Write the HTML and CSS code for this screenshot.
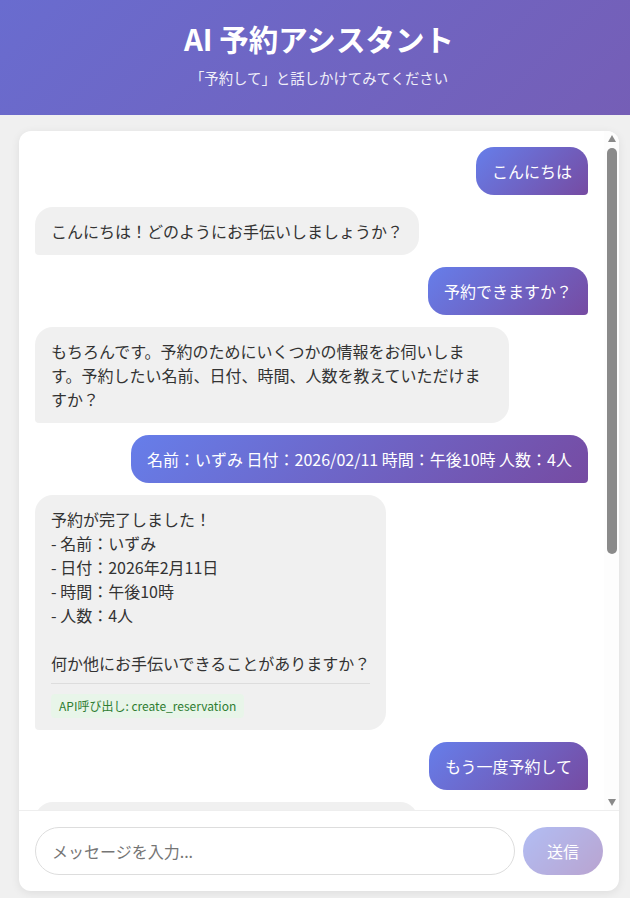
FILE: index.html
```html
<!DOCTYPE html>
<html lang="ja">
<head>
<meta charset="utf-8">
<title>AI 予約アシスタント</title>
<link rel="stylesheet" href="styles.css">
</head>
<body>
<header class="header">
  <h1 class="title">AI 予約アシスタント</h1>
  <p class="subtitle">「予約して」と話しかけてみてください</p>
</header>
<main class="chat">
  <div class="viewport">
    <div class="messages">
      <div class="msg user">こんにちは</div>
      <div class="msg bot">こんにちは！どのようにお手伝いしましょうか？</div>
      <div class="msg user">予約できますか？</div>
      <div class="msg bot">もちろんです。予約のためにいくつかの情報をお伺いします。予約したい名前、日付、時間、人数を教えていただけますか？</div>
      <div class="msg user">名前：いずみ 日付：2026/02/11 時間：午後10時 人数：4人</div>
      <div class="msg bot"><div class="pre">予約が完了しました！
- 名前：いずみ
- 日付：2026年2月11日
- 時間：午後10時
- 人数：4人

何か他にお手伝いできることがありますか？</div><div class="api"><span class="api-tag">API呼び出し: create_reservation</span></div></div>
      <div class="msg user">もう一度予約して</div>
      <div class="msg bot">承知しました。次の予約情報を教えてください：</div>
    </div>
    <div class="scrollbar" aria-hidden="true">
      <div class="sb-btn"><svg width="8" height="7" viewBox="0 0 8 7"><polygon points="4,0 8,7 0,7" fill="#8a8a8a"/></svg></div>
      <div class="sb-track"><div class="sb-thumb"></div></div>
      <div class="sb-btn"><svg width="8" height="7" viewBox="0 0 8 7"><polygon points="0,0 8,0 4,7" fill="#8a8a8a"/></svg></div>
    </div>
  </div>
  <form class="composer">
    <input class="input" type="text" placeholder="メッセージを入力...">
    <button class="send" type="button" disabled>送信</button>
  </form>
</main>
</body>
</html>
```
FILE: styles.css
```css
* { box-sizing: border-box; }
html, body { margin: 0; padding: 0; }
body {
  background: #f0f0f0;
  font-family: "Noto Sans CJK JP", "Noto Sans", sans-serif;
  color: #333;
  height: 898px;
  overflow: hidden;
}
.header {
  background: linear-gradient(135deg, #696ccf 0%, #755eb6 100%);
  color: #fff;
  text-align: center;
  padding: 20px 12px 27px 20px;
}
.title {
  margin: 0 0 12px;
  font-size: 29.5px;
  line-height: 36px;
  font-weight: 700;
}
.subtitle {
  margin: 0;
  font-size: 14.4px;
  line-height: 20px;
  opacity: 0.9;
}
.chat {
  width: 600px;
  height: 760px;
  margin: 16px 0 0 19px;
  background: #fff;
  border-radius: 12px;
  box-shadow: 0 2px 10px rgba(0, 0, 0, 0.08);
  display: flex;
  flex-direction: column;
  overflow: hidden;
}
.viewport {
  flex: 1;
  min-height: 0;
  display: flex;
}
.messages {
  flex: 1;
  min-width: 0;
  overflow: hidden;
  padding: 16px;
  display: flex;
  flex-direction: column;
  gap: 12px;
}
.scrollbar {
  width: 15px;
  flex-shrink: 0;
  display: flex;
  flex-direction: column;
  background: #fdfdfd;
}
.sb-btn {
  height: 15px;
  display: flex;
  align-items: center;
  justify-content: center;
}
.sb-btn svg { display: block; }
.sb-track {
  flex: 1;
  padding: 2px 2.5px;
}
.sb-thumb {
  height: 406px;
  background: #8a8a8a;
  border-radius: 5px;
}
.msg {
  box-sizing: content-box;
  max-width: 80%;
  padding: 12px 16px;
  font-size: 16px;
  line-height: 24px;
  border-radius: 18px;
  word-break: break-word;
  flex-shrink: 0;
}
.user {
  align-self: flex-end;
  background: linear-gradient(135deg, #667eea 0%, #764ba2 100%);
  color: #fff;
  border-bottom-right-radius: 4px;
}
.bot {
  align-self: flex-start;
  background: #f0f0f0;
  color: #333;
  border-bottom-left-radius: 4px;
}
.pre { white-space: pre-line; }
.api {
  margin-top: 8px;
  padding-top: 8px;
  border-top: 1px solid #ddd;
}
.api-tag {
  display: inline-block;
  background: #e8f5e9;
  color: #2e7d32;
  font-size: 12px;
  line-height: 16px;
  padding: 4px 8px;
  border-radius: 4px;
}
.composer {
  margin: 0;
  display: flex;
  gap: 8px;
  padding: 16px;
  border-top: 1px solid #eee;
}
.input {
  flex: 1;
  height: 48px;
  padding: 0 16px;
  border: 1px solid #ddd;
  border-radius: 24px;
  font-family: inherit;
  font-size: 16px;
  color: #333;
  outline: none;
}
.input::placeholder { color: #757575; }
.send {
  width: 80px;
  height: 48px;
  border: none;
  border-radius: 24px;
  background: linear-gradient(135deg, #667eea 0%, #764ba2 100%);
  color: #fff;
  font-family: inherit;
  font-size: 16px;
  opacity: 0.5;
}
```
